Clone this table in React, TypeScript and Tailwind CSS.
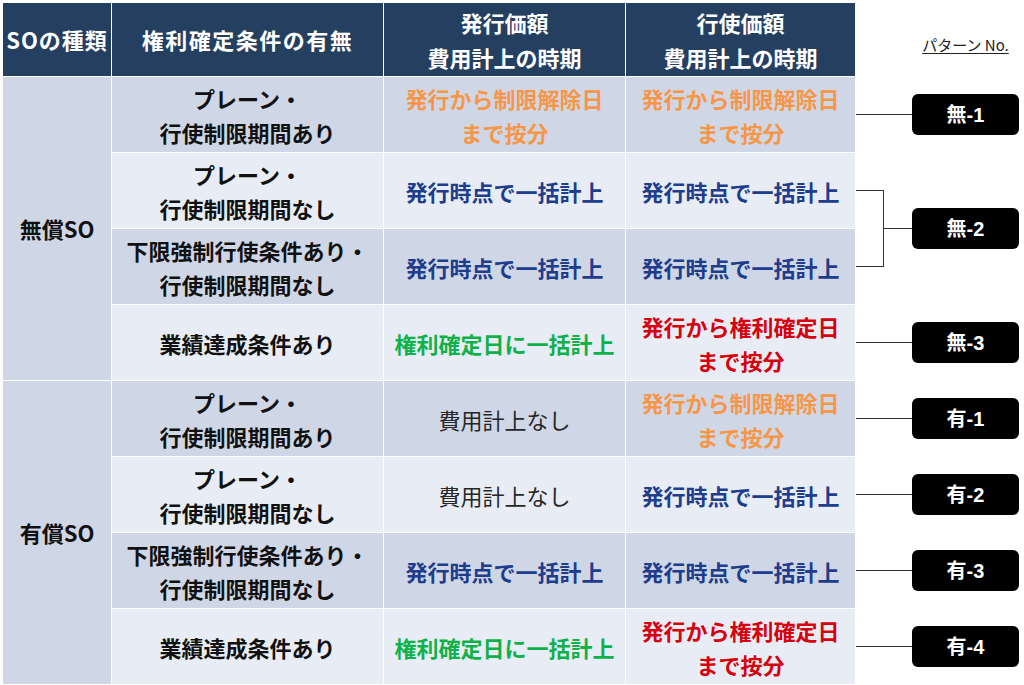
import React from "react";

type Tone = "black" | "orange" | "blue" | "green" | "red" | "plain";

const toneClass: Record<Tone, string> = {
  black: "text-[#111111] font-bold",
  orange: "text-[#f79646] font-bold",
  blue: "text-[#203c8c] font-bold",
  green: "text-[#10b04a] font-bold",
  red: "text-[#d7000f] font-bold",
  plain: "text-[#262626] font-normal",
};

type Row = {
  cond: string[];
  issue: { t: string[]; tone: Tone };
  exer: { t: string[]; tone: Tone };
};

const O = (s: string[]) => ({ t: s, tone: "orange" as Tone });
const B = (s: string[]) => ({ t: s, tone: "blue" as Tone });
const G = (s: string[]) => ({ t: s, tone: "green" as Tone });
const R = (s: string[]) => ({ t: s, tone: "red" as Tone });
const P = (s: string[]) => ({ t: s, tone: "plain" as Tone });

const kaijo = ["発行から制限解除日", "まで按分"];
const ikkatsu = ["発行時点で一括計上"];
const kenri = ["権利確定日に一括計上"];
const kakutei = ["発行から権利確定日", "まで按分"];

const rows: Row[] = [
  { cond: ["プレーン・", "行使制限期間あり"], issue: O(kaijo), exer: O(kaijo) },
  { cond: ["プレーン・", "行使制限期間なし"], issue: B(ikkatsu), exer: B(ikkatsu) },
  { cond: ["下限強制行使条件あり・", "行使制限期間なし"], issue: B(ikkatsu), exer: B(ikkatsu) },
  { cond: ["業績達成条件あり"], issue: G(kenri), exer: R(kakutei) },
  { cond: ["プレーン・", "行使制限期間あり"], issue: P(["費用計上なし"]), exer: O(kaijo) },
  { cond: ["プレーン・", "行使制限期間なし"], issue: P(["費用計上なし"]), exer: B(ikkatsu) },
  { cond: ["下限強制行使条件あり・", "行使制限期間なし"], issue: B(ikkatsu), exer: B(ikkatsu) },
  { cond: ["業績達成条件あり"], issue: G(kenri), exer: R(kakutei) },
];

const rowStart = [
  "row-start-2",
  "row-start-3",
  "row-start-4",
  "row-start-5",
  "row-start-6",
  "row-start-7",
  "row-start-8",
  "row-start-9",
];

function Lines({ lines, className }: { lines: string[]; className: string }) {
  return (
    <div className={`flex flex-col items-center text-center leading-[34px] whitespace-nowrap ${className}`}>
      {lines.map((l, i) => (
        <span key={i}>{l}</span>
      ))}
    </div>
  );
}

function Badge({ label }: { label: string }) {
  return (
    <div className="w-[107px] h-[41px] rounded-[6px] bg-black text-white flex items-center justify-center text-[20px] font-bold font-['Liberation_Sans','Noto_Sans_CJK_JP',sans-serif]">
      {label}
    </div>
  );
}

export default function App() {
  return (
    <div className="w-[1024px] h-[685px] bg-white font-['Noto_Sans_CJK_JP','Noto_Sans',sans-serif] overflow-hidden">
      <div className="pl-[3px] pt-[3px]">
        <div className="grid grid-cols-[108px_271px_241px_229px_168px] grid-rows-[73px_repeat(8,75px)] gap-px">
          {/* header */}
          <div className="col-start-1 row-start-1 bg-[#243f60] text-white font-bold text-[22px] flex items-center justify-center whitespace-nowrap tracking-[1px]">
            SOの種類
          </div>
          <div className="col-start-2 row-start-1 bg-[#243f60] text-white font-bold text-[22px] flex items-center justify-center whitespace-nowrap tracking-[1.5px]">
            権利確定条件の有無
          </div>
          <div className="col-start-3 row-start-1 bg-[#243f60] flex items-center justify-center">
            <Lines lines={["発行価額", "費用計上の時期"]} className="text-white font-bold text-[22px] leading-[35px]" />
          </div>
          <div className="col-start-4 row-start-1 bg-[#243f60] flex items-center justify-center">
            <Lines lines={["行使価額", "費用計上の時期"]} className="text-white font-bold text-[22px] leading-[35px]" />
          </div>
          <div className="col-start-5 row-start-1 flex items-start pt-[31px] pl-[56px]">
            <div className="w-[107px] text-center text-[15px] text-[#222] underline underline-offset-2 whitespace-nowrap">
              パターン No.
            </div>
          </div>

          {/* SO type */}
          <div className="col-start-1 row-start-2 row-span-4 bg-[#cfd7e6] flex items-center justify-center text-[22px] font-bold text-[#111]">
            無償SO
          </div>
          <div className="col-start-1 row-start-6 row-span-4 bg-[#cfd7e6] flex items-center justify-center text-[22px] font-bold text-[#111]">
            有償SO
          </div>

          {rows.map((r, i) => {
            const bg = i % 2 === 0 ? "bg-[#cfd7e6]" : "bg-[#e8edf5]";
            return (
              <React.Fragment key={i}>
                <div className={`col-start-2 ${rowStart[i]} ${bg} flex items-center justify-center`}>
                  <Lines lines={r.cond} className={`text-[22px] ${toneClass.black}`} />
                </div>
                <div className={`col-start-3 ${rowStart[i]} ${bg} flex items-center justify-center`}>
                  <Lines lines={r.issue.t} className={`text-[22px] ${toneClass[r.issue.tone]}`} />
                </div>
                <div className={`col-start-4 ${rowStart[i]} ${bg} flex items-center justify-center`}>
                  <Lines lines={r.exer.t} className={`text-[22px] ${toneClass[r.exer.tone]}`} />
                </div>
              </React.Fragment>
            );
          })}

          {/* patterns */}
          <div className="col-start-5 row-start-2 flex items-center">
            <div className="w-[56px] h-px bg-[#333]" />
            <Badge label="無-1" />
          </div>
          <div className="col-start-5 row-start-3 row-span-2 flex items-center">
            <div className="w-[28px] h-[77px] border-y border-r border-[#333]" />
            <div className="w-[28px] h-px bg-[#333]" />
            <Badge label="無-2" />
          </div>
          <div className="col-start-5 row-start-5 flex items-center">
            <div className="w-[56px] h-px bg-[#333]" />
            <Badge label="無-3" />
          </div>
          <div className="col-start-5 row-start-6 flex items-center">
            <div className="w-[56px] h-px bg-[#333]" />
            <Badge label="有-1" />
          </div>
          <div className="col-start-5 row-start-7 flex items-center">
            <div className="w-[56px] h-px bg-[#333]" />
            <Badge label="有-2" />
          </div>
          <div className="col-start-5 row-start-8 flex items-center">
            <div className="w-[56px] h-px bg-[#333]" />
            <Badge label="有-3" />
          </div>
          <div className="col-start-5 row-start-9 flex items-center">
            <div className="w-[56px] h-px bg-[#333]" />
            <Badge label="有-4" />
          </div>
        </div>
      </div>
    </div>
  );
}
